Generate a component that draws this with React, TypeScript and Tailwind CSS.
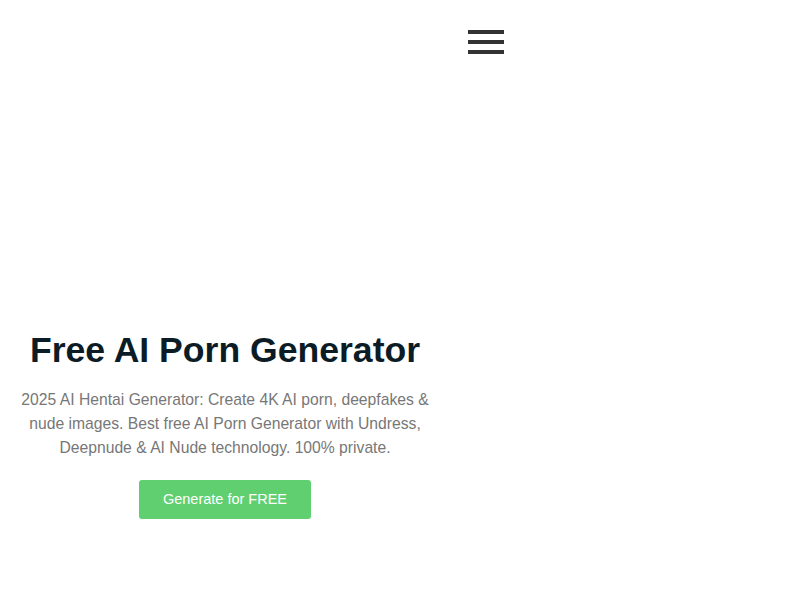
export default function App() {
  return (
    <div className="bg-white min-h-screen font-['Liberation_Sans',Arial,sans-serif]">
      <header className="w-[540px] flex justify-end pr-9 pt-[30px]">
        <button aria-label="menu" className="w-9 flex flex-col gap-1.5">
          <span className="block h-1 w-9 bg-[#333333]"></span>
          <span className="block h-1 w-9 bg-[#333333]"></span>
          <span className="block h-1 w-9 bg-[#333333]"></span>
        </button>
      </header>

      <section className="w-[450px] pt-[275px] px-4 text-center">
        <h1 className="text-[35.6px] leading-[1.2] font-bold text-[#0b1c26]">Free AI Porn Generator</h1>
        <p className="mt-[16.5px] text-[15.7px] leading-6 text-[#777777]">
          2025 AI Hentai Generator: Create 4K AI porn, deepfakes &amp; nude images. Best free AI Porn Generator with Undress, Deepnude &amp; AI Nude technology. 100% private.
        </p>
        <a className="inline-block mt-5 bg-[#5fcf70] text-white text-[14.5px] leading-[39px] h-[39px] px-6 rounded-[3px]">
          Generate for FREE
        </a>
      </section>
    </div>
  )
}
